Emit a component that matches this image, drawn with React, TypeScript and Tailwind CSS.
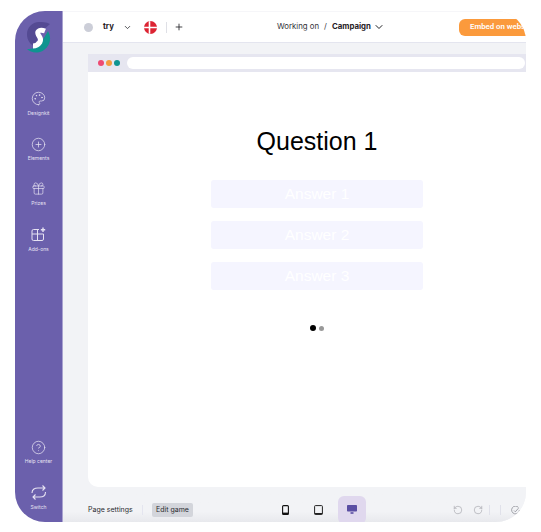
import { ChevronDown, CircleHelp, CirclePlus, Gift, Palette, Plus, RotateCcw, RotateCw } from 'lucide-react';
import type { ReactNode } from 'react';

const SideItem = ({ icon, label, className }: { icon: ReactNode; label: string; className: string }) => (
  <div className={`flex flex-col items-center gap-[2.5px] text-[#e6e2f2] ${className}`}>
    {icon}
    <span className="text-[5px] leading-[8px] whitespace-nowrap">{label}</span>
  </div>
);

const Logo = () => (
  <svg width="24" height="32" viewBox="0 0 24 32" className="shrink-0">
    <path d="M23 2 C19 0 15 0 12 0 C5 0 0 6 0 12 C0 18 3 22 7 24 L14 10 Z" fill="#544a93" />
    <path d="M21 9 C25 16 23 24 17 28 C11 32 4 31 0 27 C6 27 11 25 14 21 Z" fill="#0f9490" />
    <path d="M18 9 C13 7 10 9 11 12 C12 15 15 16 13 20 C11 23 8 24 6 24" fill="none" stroke="#ffffff" strokeWidth="5" />
  </svg>
);

const AddOns = () => (
  <svg width="15" height="15" viewBox="0 0 15 15" fill="none" stroke="currentColor" strokeWidth="1">
    <path d="M8 2.5 H2.5 A1.5 1.5 0 0 0 1 4 V12 A1.5 1.5 0 0 0 2.5 13.5 H11 A1.5 1.5 0 0 0 12.5 12 V7 H1 M6.5 2.5 V13.5" />
    <path d="M12 .5 V5 M9.8 2.8 H14.2" strokeWidth="1.4" />
  </svg>
);

const Switch = () => (
  <svg width="17" height="17" viewBox="0 0 17 17" fill="none" stroke="currentColor" strokeWidth="1.1">
    <path d="M2 9 C2 5 5 4 8 4 H15 M12.5 1.5 L15 4 L12.5 6.5" />
    <path d="M15.5 8 C15.5 12 13 13 10 13 H3 M5.5 10.5 L3 13 L5.5 15.5" />
  </svg>
);

const Phone = () => (
  <svg width="7" height="10" viewBox="0 0 7 10" fill="none" className="shrink-0">
    <rect x="0.6" y="0.6" width="5.8" height="8.8" rx="1" stroke="#111111" strokeWidth="1.1" />
    <rect x="0.6" y="7.6" width="5.8" height="1.8" fill="#111111" />
  </svg>
);

const TabletIcon = () => (
  <svg width="9" height="10" viewBox="0 0 9 10" fill="none" className="shrink-0">
    <rect x="0.6" y="0.6" width="7.8" height="8.8" rx="0.8" stroke="#222222" strokeWidth="1" />
    <rect x="0.6" y="8" width="7.8" height="1.4" fill="#222222" />
  </svg>
);

const Desktop = () => (
  <svg width="10" height="9" viewBox="0 0 10 9" fill="#5a4ea3" className="-mt-px">
    <rect x="0" y="0" width="10" height="6.6" rx="0.8" />
    <rect x="3.5" y="7.2" width="3" height="1.6" />
  </svg>
);

const Flag = () => (
  <svg width="13" height="13" viewBox="0 0 13 13" className="rounded-full shrink-0">
    <rect width="13" height="13" fill="#dc2433" />
    <path d="M5.5 0 V13 M0 6.5 H13" stroke="#ffffff" strokeWidth="1.6" />
  </svg>
);

export default function App() {
  return (
    <div className="w-[541px] h-[532px] bg-white pt-[11px] pl-[15px] font-['Inter',sans-serif]">
      <div className="w-[511px] h-[511px] flex overflow-hidden rounded-[30px]">
        {/* sidebar */}
        <aside className="w-[48px] shrink-0 bg-[#6b60ac] border-r border-[#a9a3d0] flex flex-col items-center pt-[11px]">
          <Logo />
          <SideItem className="mt-[37px]" icon={<Palette size={15} strokeWidth={1.2} />} label="Designkit" />
          <SideItem className="mt-[20px]" icon={<CirclePlus size={15} strokeWidth={1.2} />} label="Elements" />
          <SideItem className="mt-[19px]" icon={<Gift size={15} strokeWidth={1.1} />} label="Prizes" />
          <SideItem className="mt-[20.5px]" icon={<AddOns />} label="Add-ons" />
          <SideItem className="mt-auto" icon={<CircleHelp size={15} strokeWidth={1.2} />} label="Help center" />
          <SideItem className="mt-[18.5px] mb-[11px]" icon={<Switch />} label="Switch" />
        </aside>

        <div className="flex-1 min-w-0 flex flex-col bg-[#f2f3f6]">
          {/* top bar */}
          <header className="h-[32px] shrink-0 bg-white border-t border-b border-t-[#f6f6f9] border-b-[#e4e5ef] flex items-center pl-[21px] text-[7.8px] text-[#1f2024] whitespace-nowrap">
            <span className="w-[9px] h-[9px] shrink-0 rounded-full bg-[#ccced8]" />
            <span className="ml-[10px] w-[12px] shrink-0 font-bold">try</span>
            <ChevronDown size={9} className="ml-[8px] shrink-0" />
            <span className="ml-[12px] shrink-0"><Flag /></span>
            <span className="ml-[9px] w-px h-[11px] shrink-0 bg-[#dfe0e6]" />
            <Plus size={10} className="ml-[7px] shrink-0" />
            <span className="ml-[93px] w-[41px] shrink-0 text-[#33343a]">Working on</span>
            <span className="ml-[6px] w-[2px] shrink-0 text-[#33343a]">/</span>
            <span className="ml-[6px] w-[38px] shrink-0 font-bold">Campaign</span>
            <ChevronDown size={12} className="ml-[3px] shrink-0" />
            <span className="ml-[74px] h-[17px] w-[67px] shrink-0 rounded-l-[6px] bg-[#fb9a3c] text-white font-semibold flex items-center pl-[11px] overflow-hidden font-['Roboto',sans-serif]">
              Embed on website
            </span>
          </header>

          {/* preview */}
          <main className="flex-1 min-h-0 pl-[25px] pt-[11px]">
            <div className="h-[433px] bg-white rounded-bl-[10px] overflow-hidden flex flex-col">
              <div className="h-[18px] shrink-0 bg-[#e6e6f0] flex items-center pl-[10px] gap-[2px]">
                <span className="w-[6px] h-[6px] shrink-0 rounded-full bg-[#ee4a72]" />
                <span className="w-[6px] h-[6px] shrink-0 rounded-full bg-[#f59c3e]" />
                <span className="w-[6px] h-[6px] shrink-0 rounded-full bg-[#0f9490]" />
                <span className="ml-[5px] w-[398px] h-[12px] shrink-0 rounded-[6px] bg-white" />
              </div>
              <div className="w-[458px] flex flex-col items-center font-['Liberation_Sans',sans-serif]">
                <h1 className="mt-[54px] text-[25px] leading-[30px] text-black">Question 1</h1>
                <div className="mt-[24px] flex flex-col gap-[13px]">
                  {['Answer 1', 'Answer 2', 'Answer 3'].map((a) => (
                    <div key={a} className="w-[212px] h-[28px] rounded-[3px] bg-[#f5f5ff] flex items-center justify-center text-white text-[15.5px]">
                      {a}
                    </div>
                  ))}
                </div>
                <div className="mt-[35px] flex items-center gap-[3px]">
                  <span className="w-[6px] h-[6px] rounded-full bg-black" />
                  <span className="w-[5px] h-[5px] rounded-full bg-[#999999]" />
                </div>
              </div>
            </div>
          </main>

          {/* bottom bar */}
          <footer className="h-[35px] shrink-0 bg-gradient-to-b from-[#f2f3f6] from-70% to-[#e8e9ed] flex items-center pl-[25px] pt-[11px] text-[7px] text-[#2a2b30] whitespace-nowrap">
            <span className="w-[43px] shrink-0">Page settings</span>
            <span className="ml-[11px] w-px h-[10px] shrink-0 bg-[#e4e5ef]" />
            <span className="ml-[9px] h-[14px] w-[41px] shrink-0 rounded-[2px] bg-[#d3d5db] flex items-center justify-center">Edit game</span>
            <span className="ml-[89px]"><Phone /></span>
            <span className="ml-[25px]"><TabletIcon /></span>
            <span className="ml-[15px] w-[28px] h-[28px] shrink-0 rounded-[6px] bg-[#e0d8ee] flex items-center justify-center"><Desktop /></span>
            <RotateCcw size={10} strokeWidth={1.2} className="ml-[87px] shrink-0 text-[#8e8f97]" />
            <RotateCw size={10} strokeWidth={1.2} className="ml-[10px] shrink-0 text-[#8e8f97]" />
            <span className="ml-[6px] w-px h-[10px] shrink-0 bg-[#e0e1ea]" />
            <span className="ml-[10px] w-px h-[10px] shrink-0 bg-[#e0e1ea]" />
            <svg width="9" height="9" viewBox="0 0 9 9" fill="none" stroke="#8e8f97" strokeWidth="0.8" className="ml-[10px] shrink-0">
              <path d="M7.5 1.5 A3.9 3.9 0 1 0 8.4 4 M3 4.5 L4.3 5.8 L7.5 2.2" />
            </svg>
          </footer>
        </div>
      </div>
    </div>
  );
}
